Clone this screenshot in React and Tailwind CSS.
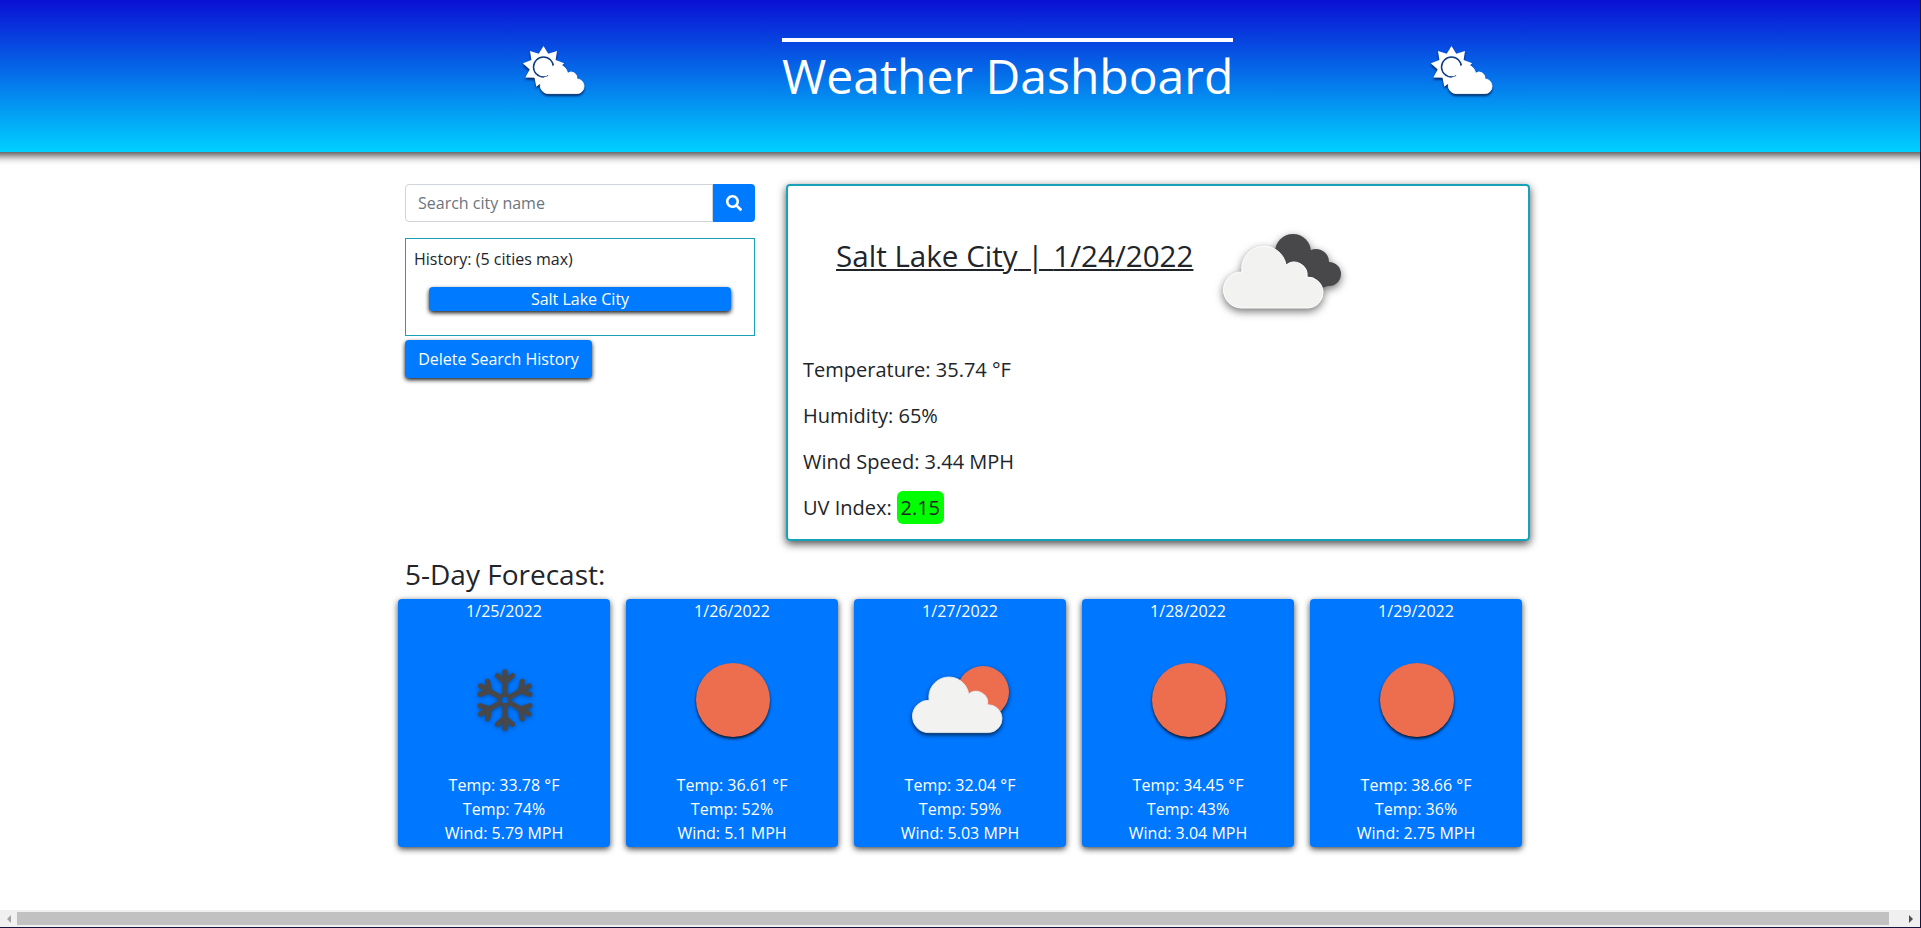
import React from "react";
import { FaSearch } from "react-icons/fa";

const forecast = [
  { date: "1/25/2022", icon: "snow", temp: "33.78", hum: "74", wind: "5.79" },
  { date: "1/26/2022", icon: "sun", temp: "36.61", hum: "52", wind: "5.1" },
  { date: "1/27/2022", icon: "partly", temp: "32.04", hum: "59", wind: "5.03" },
  { date: "1/28/2022", icon: "sun", temp: "34.45", hum: "43", wind: "3.04" },
  { date: "1/29/2022", icon: "sun", temp: "38.66", hum: "36", wind: "2.75" },
];

// cloud outline, about 100 wide and 64 tall, flat at the bottom
const cloudPath =
  "M18 64 A18 18 0 0 1 19 28 A22 22 0 0 1 63 21 A13 13 0 0 1 84 33 A15.5 15.5 0 0 1 85 64 Z";

function SnowIcon() {
  const arms = [0, 60, 120, 180, 240, 300];
  return (
    <svg viewBox="0 0 64 68" className="w-[60px] h-[64px] drop-shadow-[0_1px_2px_rgba(0,0,0,0.35)]">
      <circle cx="32" cy="34" r="5.5" fill="none" stroke="#48484a" strokeWidth="4" />
      {arms.map((a) => (
        <g key={a} transform={`rotate(${a} 32 34)`} stroke="#48484a" strokeWidth="5.5" fill="none" strokeLinecap="round">
          <path d="M32 27 L32 4" />
          <path d="M32 15 L24 8" />
          <path d="M32 15 L40 8" />
        </g>
      ))}
    </svg>
  );
}

function SunIcon() {
  return <div className="w-[74px] h-[74px] rounded-full bg-[#ed6e4e] shadow-[0_2px_3px_rgba(0,0,0,0.8)]" />;
}

function PartlyIcon() {
  return (
    <svg viewBox="0 0 98 68" className="w-[98px] h-[68px] drop-shadow-[0_2px_2px_rgba(0,0,0,0.7)]">
      <circle cx="71" cy="26" r="26" fill="#ed6e4e" />
      <g transform="translate(0 9) scale(0.9)">
        <path d={cloudPath} fill="#f2f2f0" stroke="#e3e9f0" strokeWidth="1" />
      </g>
    </svg>
  );
}

function CloudsIcon() {
  return (
    <svg viewBox="0 0 120 76" className="w-[120px] h-[76px] drop-shadow-[0_3px_4px_rgba(0,0,0,0.55)]">
      <circle cx="70" cy="18" r="18" fill="#48484a" />
      <circle cx="93" cy="28" r="13" fill="#48484a" />
      <circle cx="106" cy="40" r="12" fill="#48484a" />
      <path d="M60 14 L100 30 L105 52 L80 60 Z" fill="#48484a" />
      <g transform="translate(0 10)">
        <path d={cloudPath} fill="#f2f2f0" stroke="#ffffff" strokeWidth="1" />
      </g>
    </svg>
  );
}

function HeaderIcon() {
  const points = [];
  for (let i = 0; i < 18; i++) {
    const r = i % 2 === 0 ? 21 : 14;
    const a = (i * 20 * Math.PI) / 180 - Math.PI / 2;
    points.push(`${20.5 + r * Math.cos(a)},${21 + r * Math.sin(a)}`);
  }
  return (
    <svg viewBox="0 0 64 50" className="w-[64px] h-[50px] drop-shadow-[0_2px_1px_rgba(0,20,70,0.8)]">
      <polygon points={points.join(" ")} fill="#ffffff" />
      <circle cx="20.5" cy="21" r="10" fill="#ffffff" stroke="#0b3c86" strokeWidth="1.5" />
      <g transform="translate(17 17.5) scale(0.44 0.47)">
        <path d={cloudPath} fill="#ffffff" stroke="#ffffff" strokeWidth="2" />
      </g>
    </svg>
  );
}

function WeatherIcon({ type }) {
  if (type === "snow") return <SnowIcon />;
  if (type === "partly") return <PartlyIcon />;
  return <SunIcon />;
}

export default function App() {
  return (
    <div className="h-[928px] flex flex-col overflow-hidden bg-white border-r border-b border-[#15153f] font-['Open_Sans',sans-serif] text-[#212529]">
      <header className="h-[152px] shrink-0 -mx-5 flex items-start pt-[38px] pl-[543px] bg-linear-to-b/srgb from-[#0a10d4] to-[#00d0ff] shadow-[0_3px_9px_rgba(0,0,0,0.8)]">
        <div className="mt-[8px]">
          <HeaderIcon />
        </div>
        <h1 className="ml-[195px] w-[451px] border-t-4 border-white text-white text-[48px] leading-[68px] whitespace-nowrap text-center">
          Weather Dashboard
        </h1>
        <div className="mt-[8px] ml-[198px]">
          <HeaderIcon />
        </div>
      </header>

      <main className="flex-1 w-[1140px] mx-auto">
        <div className="flex mt-[32px]">
          <div className="w-[380px] pl-[15px] pr-[14px]">
            <div className="flex h-[38px]">
              <input
                placeholder="Search city name"
                className="flex-1 min-w-0 px-3 border border-[#ced4da] rounded-l text-base placeholder:text-[#6c757d] outline-none"
              />
              <button className="w-[42px] flex items-center justify-center bg-[#007bff] text-white rounded-r">
                <FaSearch size={16} />
              </button>
            </div>
            <div className="mt-4 h-[98px] border border-[#17a2b8] pl-2 pt-2">
              <p className="text-base leading-6">History: (5 cities max)</p>
              <button className="block mt-[16px] ml-[15px] w-[302px] h-[24px] rounded bg-[#007bff] text-white text-base leading-6 shadow-[0_2px_4px_rgba(0,0,0,0.9)]">
                Salt Lake City
              </button>
            </div>
            <button className="block mt-1 w-[187px] h-[38px] rounded bg-[#007bff] text-white text-base shadow-[0_2px_4px_rgba(0,0,0,0.9)]">
              Delete Search History
            </button>
          </div>

          <div className="w-[746px] h-[357px] ml-[17px] border-2 border-[#17a2b8] rounded shadow-[0_3px_8px_rgba(0,0,0,0.7)] pl-[15px] flex flex-col">
            <div className="flex items-start h-[161px]">
              <div className="ml-[33px] mt-[46px] w-[387px] text-[29.6px] leading-[48px] whitespace-pre">
                <span className="underline">
                  Salt Lake City<span className="[word-spacing:2px]"> | </span>1/24/2022
                </span>
              </div>
              <div className="mt-[48px]">
                <CloudsIcon />
              </div>
            </div>
            <p className="text-[20px] leading-[46px]">Temperature: 35.74 °F</p>
            <p className="text-[20px] leading-[46px]">Humidity: 65%</p>
            <p className="text-[20px] leading-[46px]">Wind Speed: 3.44 MPH</p>
            <p className="text-[20px] leading-[46px]">
              UV Index: <span className="inline-block h-[33px] leading-[33px] px-[3.5px] rounded-md bg-[#00ff00] align-baseline">2.15</span>
            </p>
          </div>
        </div>

        <h3 className="mt-[15px] ml-[15px] text-[28px] leading-[36px]">5-Day Forecast:</h3>
        <div className="flex gap-4 ml-[8px] mt-[7px]">
          {forecast.map((day) => (
            <div
              key={day.date}
              className="w-[212px] h-[248px] rounded bg-[#0077ff] text-white text-base leading-6 text-center flex flex-col shadow-[0_2px_6px_rgba(0,0,0,0.75)]"
            >
              <div>{day.date}</div>
              <div className="h-[100px] mt-[27px] mb-[10px] ml-[2px] flex items-center justify-center">
                <WeatherIcon type={day.icon} />
              </div>
              <div className="mt-auto mb-[2px]">
                <div>Temp: {day.temp} °F</div>
                <div>Temp: {day.hum}%</div>
                <div>Wind: {day.wind} MPH</div>
              </div>
            </div>
          ))}
        </div>
      </main>

      <div className="h-[17px] shrink-0 flex items-center bg-[#f0f0f0]">
        <div className="w-[17px] flex justify-center">
          <div className="w-0 h-0 border-y-[4px] border-y-transparent border-r-[4px] border-r-[#a3a3a3]" />
        </div>
        <div className="flex-1 h-[13px] bg-[#c1c1c1]" />
        <div className="w-[31px] flex justify-center">
          <div className="ml-[12px] w-0 h-0 border-y-[4px] border-y-transparent border-l-[4px] border-l-[#505050]" />
        </div>
      </div>
    </div>
  );
}
